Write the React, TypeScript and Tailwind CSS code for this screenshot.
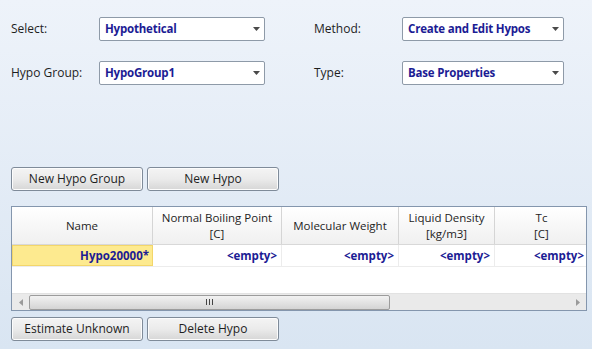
import React from 'react';

const font = { fontFamily: '"Open Sans", "Noto Sans", "Liberation Sans", sans-serif' };

function Combo({ value, width }: { value: string; width: string }) {
  return (
    <div
      className={`${width} h-[24px] flex items-center justify-between bg-white border border-[#8e9aa8] rounded-[2px] pl-[5px] pr-[4px]`}
    >
      <span className="text-[11.5px] font-bold text-[#1c1c94] tracking-[-0.2px]">{value}</span>
      <svg width="7" height="4" viewBox="0 0 7 4">
        <path d="M0 0 H7 L3.5 4 Z" fill="#4a4a4a" />
      </svg>
    </div>
  );
}

function Btn({ label }: { label: string }) {
  return (
    <button className="w-[132px] h-[24px] rounded-[3px] border border-[#7f8b99] bg-gradient-to-b from-[#f4f4f4] via-[#ebebeb] to-[#d6d6d6] text-[12px] text-[#1e1e1e] flex items-center justify-center shadow-[inset_0_0_0_1px_#fcfcfc]">
      {label}
    </button>
  );
}

const cols = [
  { w: 'w-[141px]', l1: 'Name', l2: '' },
  { w: 'w-[129px]', l1: 'Normal Boiling Point', l2: '[C]' },
  { w: 'w-[117px]', l1: 'Molecular Weight', l2: '' },
  { w: 'w-[96px]', l1: 'Liquid Density', l2: '[kg/m3]' },
  { w: 'w-[93px]', l1: 'Tc', l2: '[C]' },
];

export default function App() {
  return (
    <div
      style={font}
      className="w-[592px] h-[349px] overflow-hidden bg-gradient-to-b from-[#eef3fa] to-[#d9e5f2] px-[11px] pt-[17px] text-[#1e1e1e]"
    >
      {/* form rows */}
      <div className="flex flex-col gap-[20px]">
        <div className="flex items-center">
          <span className="w-[88px] text-[12px]">Select:</span>
          <Combo value="Hypothetical" width="w-[166px]" />
          <span className="ml-[49px] w-[88px] text-[12px]">Method:</span>
          <Combo value="Create and Edit Hypos" width="w-[162px]" />
        </div>
        <div className="flex items-center">
          <span className="w-[88px] text-[12px]">Hypo Group:</span>
          <Combo value="HypoGroup1" width="w-[166px]" />
          <span className="ml-[49px] w-[88px] text-[12px]">Type:</span>
          <Combo value="Base Properties" width="w-[162px]" />
        </div>
      </div>

      <div className="flex gap-[4px] mt-[82px]">
        <Btn label="New Hypo Group" />
        <Btn label="New Hypo" />
      </div>

      {/* grid */}
      <div className="mt-[15px] w-[576px] h-[105px] border border-[#8496ad] bg-white flex flex-col">
        <div className="flex h-[38px] bg-gradient-to-b from-[#ffffff] to-[#f0f0f0] border-b border-[#d8d8d8] overflow-hidden">
          {cols.map((c, i) => (
            <div
              key={i}
              className={`${c.w} shrink-0 flex flex-col items-center justify-center text-[11.5px] leading-[16px] ${i < cols.length - 1 ? 'border-r border-[#d5d5d5]' : ''}`}
            >
              <span>{c.l1}</span>
              {c.l2 && <span>{c.l2}</span>}
            </div>
          ))}
        </div>
        <div className="flex h-[22px] border-b border-[#ececec]">
          <div className="w-[141px] shrink-0 bg-[#fdea8f] border border-[#f3d66a] flex items-center justify-end pr-[3px] text-[11.5px] font-bold text-[#1c1c94]">
            Hypo20000*
          </div>
          {cols.slice(1).map((c, i) => (
            <div
              key={i}
              className={`${c.w} shrink-0 flex items-center justify-end pr-[4px] text-[11.5px] font-bold text-[#1c1c94] ${i < 3 ? 'border-r border-[#ececec]' : ''}`}
            >
              &lt;empty&gt;
            </div>
          ))}
        </div>
        <div className="flex-1" />
        <div className="h-[17px] bg-[#eaeaea] border-t border-[#e2e2e2] flex items-center">
          <div className="w-[17px] flex justify-center">
            <svg width="4" height="7" viewBox="0 0 4 7">
              <path d="M4 0 V7 L0 3.5 Z" fill="#9a9a9a" />
            </svg>
          </div>
          <div className="w-[361px] h-[15px] rounded-[2px] border border-[#9c9c9c] bg-gradient-to-b from-[#f2f2f2] to-[#d4d4d4] flex items-center justify-center">
            <svg width="7" height="6" viewBox="0 0 7 6">
              <rect x="0" y="0" width="1" height="6" fill="#444" />
              <rect x="3" y="0" width="1" height="6" fill="#444" />
              <rect x="6" y="0" width="1" height="6" fill="#444" />
            </svg>
          </div>
          <div className="flex-1" />
          <div className="w-[17px] flex justify-center">
            <svg width="4" height="7" viewBox="0 0 4 7">
              <path d="M0 0 V7 L4 3.5 Z" fill="#9a9a9a" />
            </svg>
          </div>
        </div>
      </div>

      <div className="flex gap-[4px] mt-[6px]">
        <Btn label="Estimate Unknown" />
        <Btn label="Delete Hypo" />
      </div>
    </div>
  );
}
